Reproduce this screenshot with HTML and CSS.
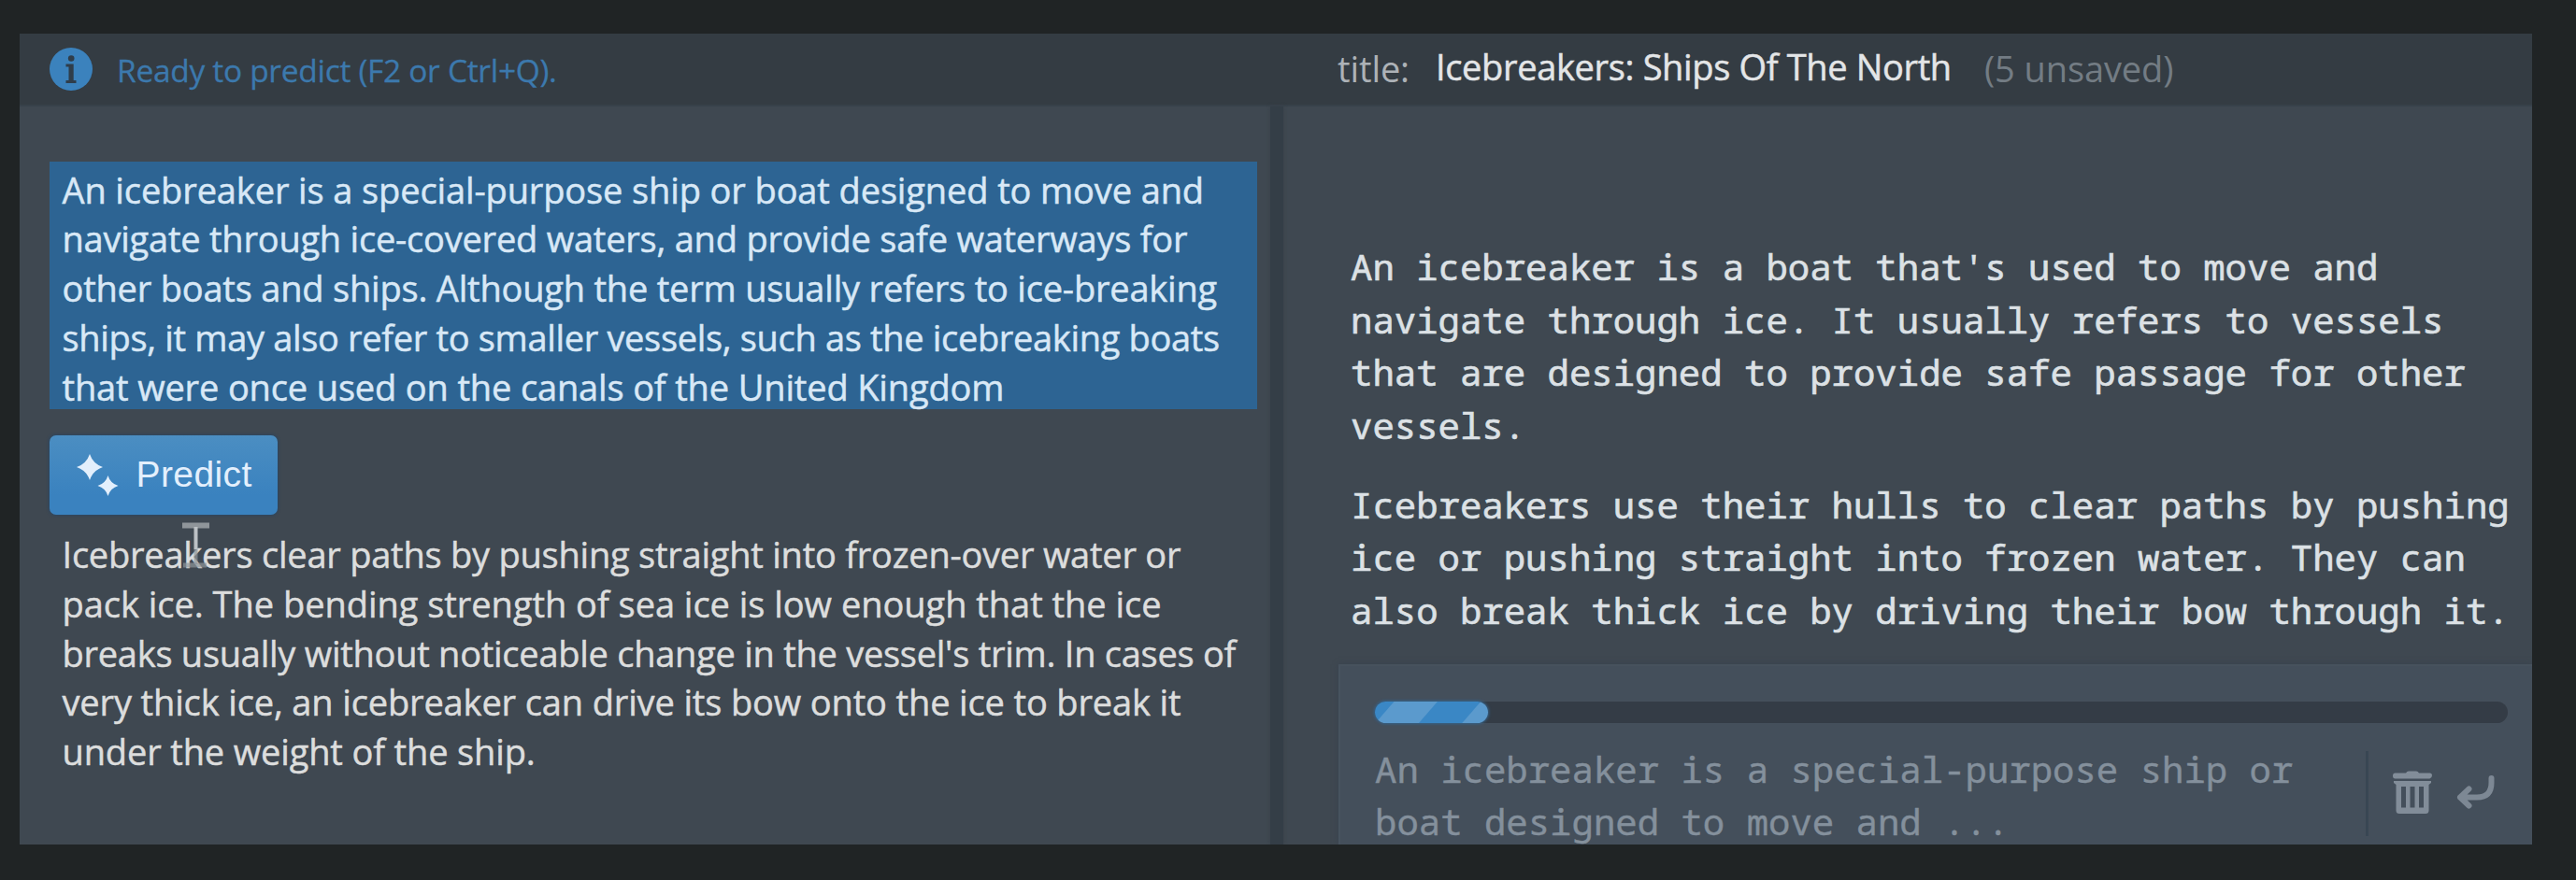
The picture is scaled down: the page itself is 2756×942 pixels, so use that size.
FILE: index.html
```html
<!DOCTYPE html>
<html lang="en">
<head>
<meta charset="utf-8">
<title>Icebreakers: Ships Of The North</title>
<link rel="stylesheet" href="styles.css">
</head>
<body>
<div class="app">
  <header class="topbar">
    <div class="status">
      <svg class="info" viewBox="0 0 46 46"><circle cx="23" cy="23" r="23" fill="#3b82bd"/><circle cx="23.2" cy="11.500" r="3.300" fill="#2f3d4a"/><path d="M17.500 17.500h8.200v17.500h2.800v3h-11v-3h3v-14.500h-3z" fill="#2f3d4a"/></svg>
      <span class="status-text">Ready to predict (F2 or Ctrl+Q).</span>
    </div>
    <div class="doc">
      <span class="doc-label">title:</span>
      <span class="doc-title">Icebreakers: Ships Of The North</span>
      <span class="doc-state">(5 unsaved)</span>
    </div>
  </header>
  <main class="panes">
    <section class="source">
      <p class="prose selected">
        <span class="l1">An icebreaker is a special-purpose ship or boat designed to move and</span>
        <span class="l2">navigate through ice-covered waters, and provide safe waterways for</span>
        <span class="l3">other boats and ships. Although the term usually refers to ice-breaking</span>
        <span class="l4">ships, it may also refer to smaller vessels, such as the icebreaking boats</span>
        <span class="l5">that were once used on the canals of the United Kingdom</span>
      </p>
      <button class="predict">
        <svg class="sparkles" viewBox="0 0 46 46"><path d="M15 1Q18.500 11.500 29 15Q18.500 18.500 15 29Q11.500 18.500 1 15Q11.500 11.500 15 1ZM34.500 24Q37 32.500 45.500 35Q37 37.500 34.500 46Q32 37.500 23.500 35Q32 32.500 34.500 24Z" fill="#e3effc"/></svg>
        <span>Predict</span>
      </button>
      <p class="prose rest">
        <span class="r1">Icebreakers clear paths by pushing straight into frozen-over water or</span>
        <span class="r2">pack ice. The bending strength of sea ice is low enough that the ice</span>
        <span class="r3">breaks usually without noticeable change in the vessel's trim. In cases of</span>
        <span class="r4">very thick ice, an icebreaker can drive its bow onto the ice to break it</span>
        <span class="r5">under the weight of the ship.</span>
      </p>
      <svg class="cursor" viewBox="0 0 32 52"><g fill="none" stroke="#8f959a"><path d="M1 4.500H30" stroke-width="6"/><path d="M2 47H27" stroke-width="5" opacity=".7"/></g><path d="M15.500 6V30" stroke="#bcc1c5" stroke-width="4"/><path d="M15.500 30V46" stroke="#8f959a" stroke-width="4" opacity=".7"/></svg>
    </section>
    <div class="divider"></div>
    <section class="output">
      <p class="mono">An icebreaker is a boat that's used to move and<br>navigate through ice. It usually refers to vessels<br>that are designed to provide safe passage for other<br>vessels.</p>
      <p class="mono">Icebreakers use their hulls to clear paths by pushing<br>ice or pushing straight into frozen water. They can<br>also break thick ice by driving their bow through it.</p>
      <div class="job">
        <div class="track"><div class="fill"></div></div>
        <div class="job-row">
          <p class="mono job-text">An icebreaker is a special-purpose ship or<br>boat designed to move and ...</p>
          <div class="actions">
            <svg class="trash" viewBox="0 0 42 46"><path fill="#828d99" fill-rule="evenodd" d="M14 2.500Q15 .5 17 .5H25Q27 .5 28 2.500H39.500Q42 2.500 42 5T39.500 8.500H2.500Q0 8.500 0 5.500T2.500 2.500ZM1 11H41V13L38.500 15V42.500Q38.500 46 35 46H7Q3.500 46 3.500 42.500V15L1 13ZM9 17V39.500H14V17ZM18.500 17V39.500H23.500V17ZM28 17V39.500H33V17Z"/></svg>
            <svg class="enter" viewBox="0 0 42 36"><path d="M37.500 3V8Q37.500 23.500 22 23.500H4M13.500 14.500L4 23.500L13.500 32.500" fill="none" stroke="#7d8894" stroke-width="6" stroke-linecap="round" stroke-linejoin="round"/></svg>
          </div>
        </div>
      </div>
    </section>
  </main>
</div>
</body>
</html>
```
FILE: styles.css
```css
* { box-sizing: border-box; }
body {
  margin: 0;
  width: 2756px;
  height: 942px;
  padding: 36px 47px 38px 21px;
  overflow: hidden;
  background: #202425;
  font-family: "Open Sans", "Noto Sans", sans-serif;
  font-size: 38px;
}
p { margin: 0; }
svg { display: block; flex: none; }
.app {
  height: 868px;
  display: flex;
  flex-direction: column;
  overflow: hidden;
  background: #3f4851;
}
.topbar {
  flex: none;
  height: 78px;
  display: flex;
  background: #343c43;
  border-bottom: 2px solid #37414a;
  white-space: nowrap;
}
.status { width: 1352px; display: flex; padding-left: 32px; color: #3c79ad; }
.info { width: 46px; height: 46px; margin: 15px 26px 0 0; }
.status-text { font-size: 33.5px; line-height: 46px; letter-spacing: -0.3px; padding-top: 15.5px; -webkit-text-stroke: 0.3px; }
.doc { display: flex; align-items: flex-start; padding: 8.5px 0 0 58px; line-height: 52px; }
.doc-label { width: 105px; padding-top: 2px; color: #adb2b7; letter-spacing: -0.1px; }
.doc-title { width: 587px; color: #e3e5e7; letter-spacing: -0.35px; -webkit-text-stroke: 0.5px; }
.doc-state { padding-top: 2px; color: #737c84; letter-spacing: -0.1px; }
.panes { flex: 1; min-height: 0; display: flex; }

.source { position: relative; width: 1338px; flex: none; padding: 59px 0 0 32px; }
.prose { white-space: nowrap; padding-left: 13.5px; line-height: 52.8px; -webkit-text-stroke: 0.5px; }
.prose span { display: block; }
.selected {
  width: 1292px;
  height: 265px;
  padding-top: 3.5px;
  background: #2d6493;
  color: #d8e8f6;
}
.rest { margin-top: 16px; color: #dcdddd; }
.l1 { letter-spacing: -0.12px; }
.l2 { letter-spacing: -0.22px; }
.l3 { letter-spacing: -0.2px; }
.l4 { letter-spacing: -0.33px; }
.l5 { letter-spacing: -0.15px; }
.r1 { letter-spacing: -0.23px; }
.r2 { letter-spacing: -0.03px; }
.r3 { letter-spacing: -0.26px; }
.r4 { letter-spacing: -0.14px; }
.r5 { letter-spacing: -0.14px; }
.predict {
  display: flex;
  align-items: center;
  width: 244px;
  height: 85px;
  margin-top: 28px;
  padding: 0 0 2px 28px;
  gap: 18.5px;
  border: 0;
  border-radius: 7px;
  background: linear-gradient(#4b8ec2, #3a82bf 75%);
  box-shadow: 0 0 3px 1px #2c4661;
  color: #e3effc;
  font: 39px/44px "Liberation Sans", Arial, sans-serif;
  letter-spacing: 0.4px;
}
.sparkles { width: 46px; height: 46px; margin-top: 1px; }
.cursor { position: absolute; left: 173px; top: 444px; width: 32px; height: 52px; }

.divider { width: 14px; flex: none; background: #343e47; box-shadow: 0 0 4px #384149; }

.output { flex: 1; min-width: 0; padding: 143px 0 0 59px; display: flex; flex-direction: column; }
.mono {
  font-family: "Noto Sans Mono", "DejaVu Sans Mono", monospace;
  font-size: 39px;
  line-height: 56.5px;
  letter-spacing: -0.01px;
  color: #dce1e5;
  white-space: nowrap;
  padding-left: 13px;
  -webkit-text-stroke: 0.6px;
}
.mono + .mono { margin-top: 28.7px; }
.job {
  flex: none;
  margin-top: 30px;
  height: 193px;
  overflow: hidden;
  background: #444f5b;
  border-left: 2px solid #47535f;
  border-top: 2px solid #47525d;
  box-shadow: 0 0 6px #38434e;
  padding: 37.5px 26px 0 37px;
}
.track { height: 23px; border-radius: 12px; background: #343c46; }
.fill {
  width: 121px;
  height: 23px;
  border-radius: 12px;
  background: linear-gradient(131deg, #3a87c5 15px, #5b9acd 16px 50px, #3a87c5 51px 85px, #5b9acd 86px);
  box-shadow: 0 0 3px 1px #34638d;
}
.job-row { display: flex; margin-top: 21px; }
.job-text { width: 1060px; padding: 0; color: #84909c; -webkit-text-stroke: 0.4px; }
.actions {
  display: flex;
  align-items: flex-start;
  width: 151px;
  height: 91px;
  margin-top: 9px;
  padding: 21px 0 0 26px;
  gap: 26px;
  border-left: 3px solid #394653;
}
.trash { width: 42px; height: 46px; }
.enter { width: 42px; height: 36px; margin-top: 5px; }
```
